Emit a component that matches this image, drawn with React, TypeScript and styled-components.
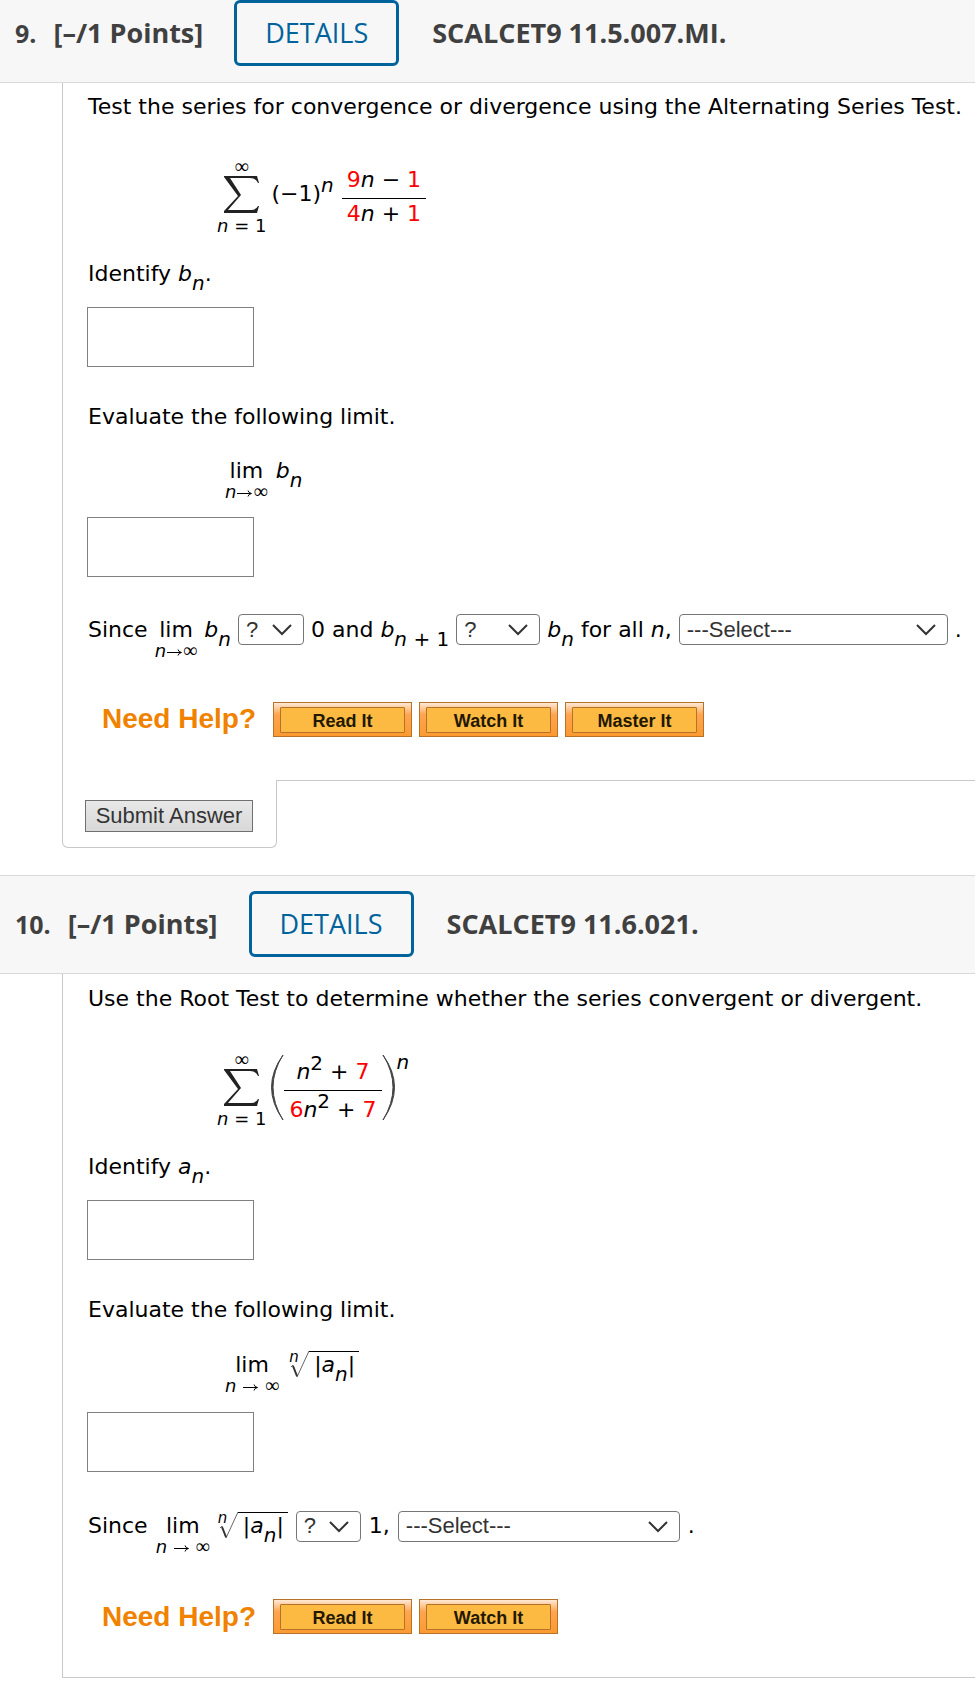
import React, { useId } from "react";
import styled, { createGlobalStyle } from "styled-components";

const GlobalStyle = createGlobalStyle`
  *, *::before, *::after { box-sizing: border-box; }
  body {
    margin: 0;
    background: #fff;
    color: #000;
    font: 22px/26px Verdana, "DejaVu Sans", sans-serif;
  }
`;

const Header = styled.header<{ $first?: boolean }>`
  display: flex;
  align-items: center;
  padding: ${(p) => (p.$first ? "0 15px 16px" : "15px 15px 16px")};
  background: #f7f7f7;
  border-top: ${(p) => (p.$first ? "0" : "1px solid #d9d9d9")};
  border-bottom: 1px solid #d9d9d9;
  color: #404040;
  font: 700 27px/34px "Open Sans", sans-serif;
`;

const HeaderNumber = styled.span`
  margin-right: 17px;
  font-size: 25px;
`;

const HeaderPoints = styled.span`
  margin-right: 31px;
`;

const DetailsButton = styled.button`
  width: 165px;
  height: 66px;
  margin-right: 33px;
  padding: 0;
  background: transparent;
  border: 3px solid #00639b;
  border-radius: 6px;
  color: #00639b;
  font: 500 27px/34px "Open Sans", sans-serif;
`;

const Body = styled.section<{ $closed?: boolean }>`
  margin-left: 62px;
  padding: ${(p) => (p.$closed ? 12 : 11)}px 0 43px 24px;
  border-left: 1px solid #c8c8c8;
  border-bottom: ${(p) => (p.$closed ? "1px solid #c8c8c8" : "0")};
`;

const Prompt = styled.p`
  margin: 0 0 0 1px;
`;

const Formula = styled.div<{ $tall?: boolean }>`
  display: flex;
  align-items: center;
  margin: ${(p) => (p.$tall ? 41 : 40)}px 0 24px 130px;
`;

const LimitFormula = styled.div<{ $tall?: boolean }>`
  display: flex;
  align-items: baseline;
  gap: ${(p) => (p.$tall ? 10 : 8)}px;
  margin: 28px 0 ${(p) => (p.$tall ? 18 : 17)}px 138px;
`;

const FieldLabel = styled.label`
  display: block;
  margin-left: 1px;
`;

const AnswerInput = styled.input`
  display: block;
  width: 167px;
  height: 60px;
  padding: 4px 8px;
  border: 1px solid #808080;
  font: inherit;
`;

const IdentifyInput = styled(AnswerInput)`
  margin: 20px 0 37px;
`;

const SentenceRow = styled.div<{ $tall?: boolean }>`
  display: flex;
  flex-wrap: wrap;
  align-items: baseline;
  gap: ${(p) => (p.$tall ? 8 : 7)}px;
  margin: ${(p) => (p.$tall ? "39px 0 44px 1px" : "37px 0 43px 1px")};
`;

const Sub = styled.sub`
  font-size: 20px;
  line-height: 0;
  vertical-align: -9px;
`;

const Sup = styled.sup`
  font-size: 20px;
  line-height: 0;
  vertical-align: 9px;
`;

const Red = styled.span`
  color: #f00;
`;

const SumColumn = styled.span`
  display: flex;
  flex-direction: column;
  align-items: center;
  font-size: 18px;
  line-height: 22px;
`;

const Thin = styled.span`
  font-family: "Liberation Serif", serif;
  font-size: 20px;
  line-height: 0;
`;

const SumTop = styled(Thin)`
  line-height: 12px;
`;

const Sigma = styled.svg`
  width: 36px;
  height: 37px;
  margin: 4px 0 2px;
`;

const Power = styled.span`
  margin: 0 8px 9px 5px;
`;

const Fraction = styled.span<{ $raise?: number }>`
  display: flex;
  flex-direction: column;
  text-align: center;
  margin-bottom: ${(p) => p.$raise ?? 0}px;
`;

const Numerator = styled.span`
  padding: 0 5px 5px;
  border-bottom: 1px solid #000;
`;

const Denominator = styled.span<{ $tall?: boolean }>`
  padding: ${(p) => (p.$tall ? 6 : 2)}px 5px 0;
`;

const Paren = styled.svg<{ $lead?: boolean }>`
  width: 14px;
  height: 65px;
  margin: 0 0 8px ${(p) => (p.$lead ? 4 : 0)}px;
`;

const Exponent = styled(Sup)`
  align-self: flex-start;
  margin: 3px 0 0 1px;
  line-height: 12px;
`;

const LimColumn = styled.span`
  display: inline-flex;
  flex-direction: column;
  align-items: center;
`;

const LimUnder = styled.span`
  font-size: 18px;
  line-height: 16px;
  white-space: pre;
`;

const Root = styled.span`
  display: inline-flex;
`;

const RootSign = styled.span`
  position: relative;
  width: 20px;
  height: 28px;
`;

const RootIndex = styled.i`
  position: absolute;
  top: 0;
  left: 0;
  font-size: 15px;
  line-height: 12px;
`;

const Radicand = styled.span`
  align-self: baseline;
  padding: 0 4px 0 5px;
  border-top: 1px solid #000;
`;

const SelectBox = styled.span<{ $width: number }>`
  position: relative;
  width: ${(p) => p.$width}px;
`;

const NativeSelect = styled.select`
  appearance: none;
  width: 100%;
  height: 31px;
  padding: 0 36px 0 7px;
  background: #fff;
  border: 1px solid #767676;
  border-radius: 4px;
  color: #333;
  font: 22px/28px "Liberation Sans", Arial, sans-serif;
`;

const Chevron = styled.svg`
  position: absolute;
  top: 10px;
  right: 12px;
  width: 20px;
  height: 12px;
  pointer-events: none;
`;

const HelpRow = styled.div`
  display: flex;
  align-items: center;
  gap: 7px;
  margin-left: 15px;
`;

const HelpTitle = styled.span`
  margin-right: 10px;
  color: #f08200;
  font: 700 28px/32px "Liberation Sans", Arial, sans-serif;
`;

const HelpButton = styled.button`
  width: 139px;
  height: 35px;
  padding: 4px 6px;
  background: linear-gradient(#ffe9d6, #ffa550 35%, #fc9a30);
  border: 1px solid #b5722a;
  color: #221800;
  font: 700 18px/22px "Liberation Sans", Arial, sans-serif;
`;

const HelpFace = styled.span`
  display: block;
  padding-top: 2px;
  background: #fdba43;
  border: 1px solid #b5722a;
  border-radius: 1px;
`;

const Footer = styled.footer`
  display: flex;
  margin: 0 0 27px 62px;
`;

const SubmitTab = styled.div`
  padding: 20px 23px 15px 22px;
  border: 1px solid #c8c8c8;
  border-top: 0;
  border-radius: 0 0 6px 6px;
`;

const FooterLine = styled.div`
  flex: 1;
  border-top: 1px solid #c8c8c8;
`;

const SubmitButton = styled.button`
  display: block;
  width: 168px;
  height: 32px;
  padding: 0;
  background: linear-gradient(#e8e8e8, #d8d8d8);
  border: 1px solid #707070;
  color: #333;
  font: 22px/28px "Liberation Sans", Arial, sans-serif;
`;

function Sum() {
  return (
    <SumColumn>
      <SumTop>∞</SumTop>
      <Sigma viewBox="0 0 36 37" aria-hidden="true">
        <path
          d="M0 0H33L35 7H34Q32 2 26 2H6L17 19L4 34H27Q32 34 34 30H35L33 37H0V35L14 20L0 1Z"
          fill="#222"
        />
      </Sigma>
      <span>
        <i>n</i> = 1
      </span>
    </SumColumn>
  );
}

function Arrow() {
  return (
    <svg width="17" height="8" viewBox="0 0 17 8" role="img" aria-label="approaches">
      <path d="M1 3.5H15M12 0.5Q12.5 3 15.5 3.5Q12.5 4 12 6.5" fill="none" stroke="#000" strokeWidth="1" />
    </svg>
  );
}

function Lim({ spaced }: { spaced?: boolean }) {
  const gap = spaced ? " " : "";
  return (
    <LimColumn>
      <span>lim</span>
      <LimUnder>
        <i>n</i>
        {gap}
        <Arrow />
        {gap}
        <Thin>∞</Thin>
      </LimUnder>
    </LimColumn>
  );
}

function Term({ name }: { name: string }) {
  return (
    <>
      <i>{name}</i>
      <Sub>
        <i>n</i>
      </Sub>
    </>
  );
}

function RootOfTerm() {
  return (
    <Root>
      <RootSign>
        <RootIndex>n</RootIndex>
        <svg width="20" height="28" viewBox="0 0 20 28" aria-hidden="true">
          <path d="M2 16L4 14L8 26L20 0" fill="none" stroke="#666" strokeWidth="1" />
          <path d="M4 15L8 25" stroke="#333" strokeWidth="2" />
        </svg>
      </RootSign>
      <Radicand>
        |<Term name="a" />|
      </Radicand>
    </Root>
  );
}

function Select({ label, width, text }: { label: string; width: number; text: string }) {
  return (
    <SelectBox $width={width}>
      <NativeSelect aria-label={label}>
        <option>{text}</option>
      </NativeSelect>
      <Chevron viewBox="0 0 20 12" aria-hidden="true">
        <path d="M1 1L10 10L19 1" fill="none" stroke="#333" strokeWidth="2" />
      </Chevron>
    </SelectBox>
  );
}

function QuestionHeader({ number, code, first }: { number: number; code: string; first?: boolean }) {
  return (
    <Header $first={first}>
      <HeaderNumber>{number}.</HeaderNumber>
      <HeaderPoints>[–/1 Points]</HeaderPoints>
      <DetailsButton type="button">DETAILS</DetailsButton>
      <span>{code}</span>
    </Header>
  );
}

function Identify({ name }: { name: string }) {
  const id = useId();
  return (
    <>
      <FieldLabel htmlFor={id}>
        Identify <Term name={name} />.
      </FieldLabel>
      <IdentifyInput id={id} type="text" />
    </>
  );
}

function Evaluate({ tall, children }: { tall?: boolean; children: React.ReactNode }) {
  const id = useId();
  return (
    <>
      <FieldLabel htmlFor={id}>Evaluate the following limit.</FieldLabel>
      <LimitFormula $tall={tall}>{children}</LimitFormula>
      <AnswerInput id={id} type="text" />
    </>
  );
}

function Help({ items }: { items: string[] }) {
  return (
    <HelpRow>
      <HelpTitle>Need Help?</HelpTitle>
      {items.map((item) => (
        <HelpButton key={item} type="button">
          <HelpFace>{item}</HelpFace>
        </HelpButton>
      ))}
    </HelpRow>
  );
}

export default function App() {
  return (
    <main>
      <GlobalStyle />
      <QuestionHeader first number={9} code="SCALCET9 11.5.007.MI." />
      <Body>
        <Prompt>Test the series for convergence or divergence using the Alternating Series Test.</Prompt>
        <Formula>
          <Sum />
          <Power>
            (−1)
            <Sup>
              <i>n</i>
            </Sup>
          </Power>
          <Fraction $raise={3}>
            <Numerator>
              <Red>9</Red>
              <i>n</i> − <Red>1</Red>
            </Numerator>
            <Denominator>
              <Red>4</Red>
              <i>n</i> + <Red>1</Red>
            </Denominator>
          </Fraction>
        </Formula>
        <Identify name="b" />
        <Evaluate>
          <Lim />
          <span>
            <Term name="b" />
          </span>
        </Evaluate>
        <SentenceRow>
          <span>Since</span>
          <Lim />
          <span>
            <Term name="b" />
          </span>
          <Select label="Limit comparison" width={66} text="?" />
          <span>
            0 and <i>b</i>
            <Sub>
              <i>n</i> + 1
            </Sub>
          </span>
          <Select label="Term comparison" width={84} text="?" />
          <span>
            <Term name="b" /> for all <i>n</i>,
          </span>
          <Select label="Conclusion" width={269} text="---Select---" />
          <span>.</span>
        </SentenceRow>
        <Help items={["Read It", "Watch It", "Master It"]} />
      </Body>
      <Footer>
        <SubmitTab>
          <SubmitButton type="button">Submit Answer</SubmitButton>
        </SubmitTab>
        <FooterLine />
      </Footer>
      <QuestionHeader number={10} code="SCALCET9 11.6.021." />
      <Body $closed>
        <Prompt>Use the Root Test to determine whether the series convergent or divergent.</Prompt>
        <Formula $tall>
          <Sum />
          <Paren $lead viewBox="0 0 14 65" aria-hidden="true">
            <path d="M13 0Q-10 32 13 65Q-7 32 13 0Z" fill="#444" stroke="#444" strokeWidth="1" />
          </Paren>
          <Fraction>
            <Numerator>
              <i>n</i>
              <Sup>2</Sup> + <Red>7</Red>
            </Numerator>
            <Denominator $tall>
              <Red>6</Red>
              <i>n</i>
              <Sup>2</Sup> + <Red>7</Red>
            </Denominator>
          </Fraction>
          <Paren viewBox="0 0 14 65" aria-hidden="true">
            <path d="M1 0Q24 32 1 65Q21 32 1 0Z" fill="#444" stroke="#444" strokeWidth="1" />
          </Paren>
          <Exponent>
            <i>n</i>
          </Exponent>
        </Formula>
        <Identify name="a" />
        <Evaluate tall>
          <Lim spaced />
          <RootOfTerm />
        </Evaluate>
        <SentenceRow $tall>
          <span>Since</span>
          <Lim spaced />
          <RootOfTerm />
          <Select label="Root limit comparison" width={65} text="?" />
          <span>1,</span>
          <Select label="Root test conclusion" width={282} text="---Select---" />
          <span>.</span>
        </SentenceRow>
        <Help items={["Read It", "Watch It"]} />
      </Body>
    </main>
  );
}
